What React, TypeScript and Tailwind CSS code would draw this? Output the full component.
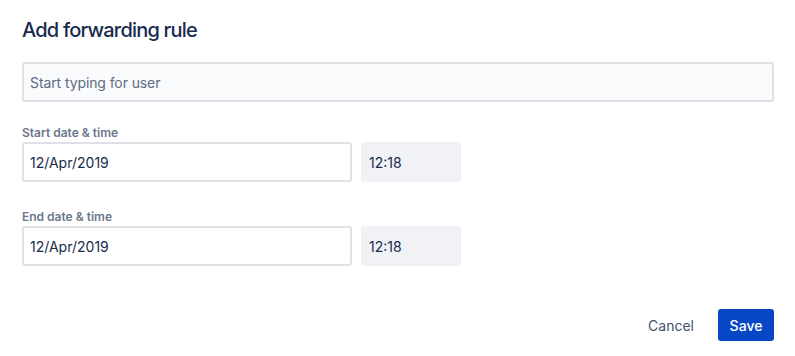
import React from 'react';

function Label({ children }: { children: React.ReactNode }) {
  return (
    <div className="text-[12px] leading-[16px] font-semibold text-[#6B778C]">{children}</div>
  );
}

function DateTimeRow({ date, time }: { date: string; time: string }) {
  return (
    <div className="mt-px flex items-center gap-[9px]">
      <div className="flex h-10 w-[330px] items-center rounded-[3px] border-2 border-[#DFE1E6] bg-white px-1.5 text-[14px] text-[#172B4D]">
        {date}
      </div>
      <div className="flex h-10 w-[100px] items-center rounded-[3px] border-2 border-transparent bg-[#F1F2F5] px-1.5 text-[14px] text-[#172B4D]">
        {time}
      </div>
    </div>
  );
}

export default function App() {
  return (
    <div
      className="h-[356px] w-[795px] bg-white pl-[22px] pr-[21px] pt-[18px]"
      style={{ fontFamily: 'Inter, "Noto Sans", sans-serif' }}
    >
      <h1 className="text-[20px] leading-[24px] font-medium tracking-[-0.8px] text-[#172B4D]">Add forwarding rule</h1>

      {/* User search */}
      <div className="mt-5 flex h-10 items-center rounded-[3px] border-2 border-[#DFE1E6] bg-[#FAFBFC] px-1.5 text-[14px] tracking-[-0.1px] text-[#5E6C84]">
        Start typing for user
      </div>

      <div className="mt-[23px]">
        <Label>Start date &amp; time</Label>
        <DateTimeRow date="12/Apr/2019" time="12:18" />
      </div>

      <div className="mt-[27px]">
        <Label>End date &amp; time</Label>
        <DateTimeRow date="12/Apr/2019" time="12:18" />
      </div>

      {/* Actions */}
      <div className="mt-[43px] flex items-center justify-end gap-3">
        <button className="flex h-8 items-center px-3 text-[14px] text-[#42526E]">Cancel</button>
        <button className="flex h-8 w-[56px] items-center justify-center rounded-[3px] bg-[#0747C6] text-[14px] font-medium text-white">
          Save
        </button>
      </div>
    </div>
  );
}
